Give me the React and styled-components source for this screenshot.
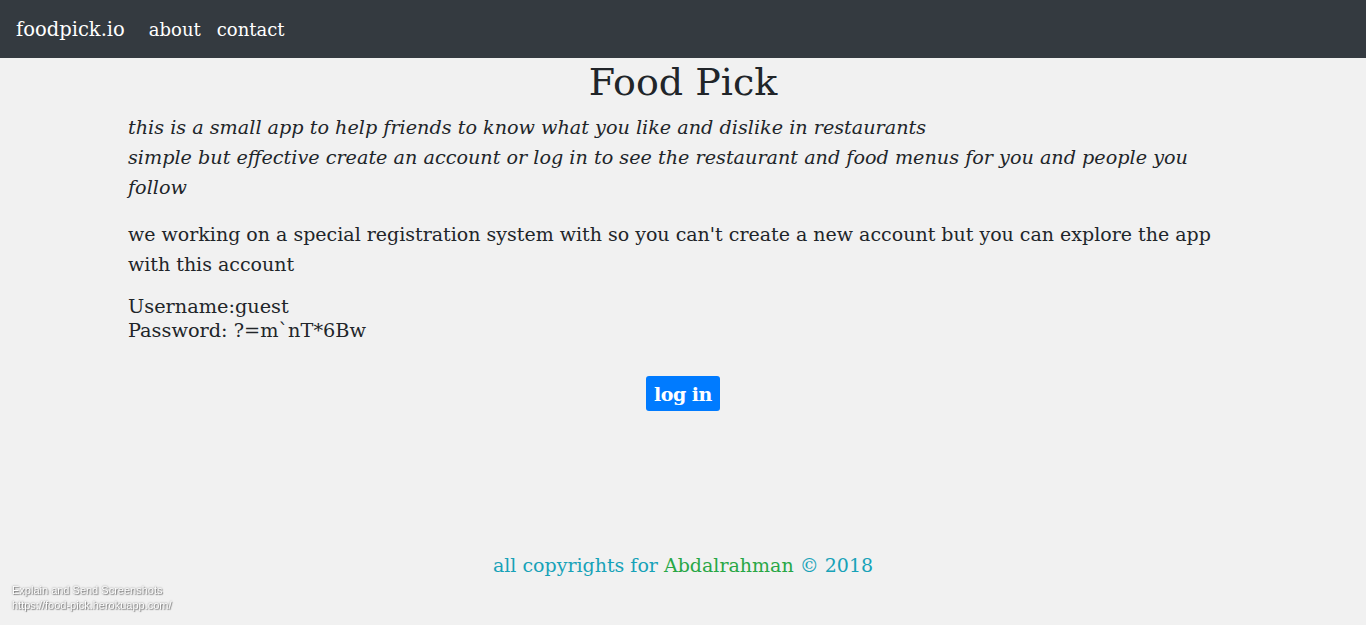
import React from "react";
import styled, { createGlobalStyle } from "styled-components";

const Global = createGlobalStyle`
  html, body { margin: 0; padding: 0; }
  body {
    background: #f1f1f1;
    font-family: "DejaVu Serif", "Liberation Serif", serif;
    color: #212529;
    height: 625px;
    overflow: hidden;
  }
`;

const Nav = styled.nav`
  height: 58px;
  background: #343a40;
  display: flex;
  align-items: center;
  padding: 0 16px;
  gap: 24px;
`;

const Brand = styled.a`
  color: #fff;
  font-size: 19.5px;
  text-decoration: none;
`;

const Links = styled.div`
  display: flex;
  gap: 16px;
`;

const NavLink = styled.a`
  color: #fff;
  font-size: 18px;
  text-decoration: none;
`;

const Container = styled.main`
  width: 1140px;
  margin: 0 auto;
  padding: 0 15px;
  box-sizing: border-box;
  height: 567px;
  display: flex;
  flex-direction: column;
  position: relative;
`;

const Title = styled.h1`
  margin: 0 0 7px;
  text-align: center;
  font-weight: 400;
  font-size: 38px;
  line-height: 48px;
`;

const Intro = styled.p`
  margin: 0;
  font-style: italic;
  font-size: 19.2px;
  line-height: 30px;
`;

const Para = styled.p`
  margin: 16px 0 0;
  font-size: 19px;
  line-height: 30px;
`;

const Creds = styled.div`
  margin-top: 16px;
  font-size: 19.3px;
  line-height: 24px;
`;

const ButtonRow = styled.div`
  display: flex;
  justify-content: center;
  margin-top: 33px;
`;

const LoginButton = styled.button`
  background: #007bff;
  color: #fff;
  border: none;
  border-radius: 3px;
  font-family: inherit;
  font-weight: 700;
  font-size: 19px;
  letter-spacing: -0.5px;
  height: 35px;
  width: 74px;
  padding: 0;
  cursor: pointer;
`;

const Footer = styled.footer`
  margin-top: auto;
  margin-bottom: 49px;
  text-align: center;
  font-size: 19px;
  color: #17a2b8;
`;

const Author = styled.span`
  color: #28a745;
`;

const Watermark = styled.div`
  position: fixed;
  left: 12px;
  bottom: 12px;
  font-family: "Liberation Sans", Arial, sans-serif;
  font-size: 11px;
  line-height: 15px;
  color: #fff;
  text-shadow: 0 0 2px #777, 1px 1px 1px #888;
`;

export default function App() {
  return (
    <>
      <Global />
      <Nav>
        <Brand href="#">foodpick.io</Brand>
        <Links>
          <NavLink href="#">about</NavLink>
          <NavLink href="#">contact</NavLink>
        </Links>
      </Nav>
      <Container>
        <Title>Food Pick</Title>
        <Intro>
          this is a small app to help friends to know what you like and dislike in restaurants
          <br />
          simple but effective create an account or log in to see the restaurant and food menus for you and people you follow
        </Intro>
        <Para>
          we working on a special registration system with so you can't create a new account but you can explore the app with this account
        </Para>
        <Creds>
          Username:guest
          <br />
          Password: ?=m`nT*6Bw
        </Creds>
        <ButtonRow>
          <LoginButton>log in</LoginButton>
        </ButtonRow>
        <Footer>
          all copyrights for <Author>Abdalrahman</Author> © 2018
        </Footer>
      </Container>
      <Watermark>
        Explain and Send Screenshots
        <br />
        https://food-pick.herokuapp.com/
      </Watermark>
    </>
  );
}
